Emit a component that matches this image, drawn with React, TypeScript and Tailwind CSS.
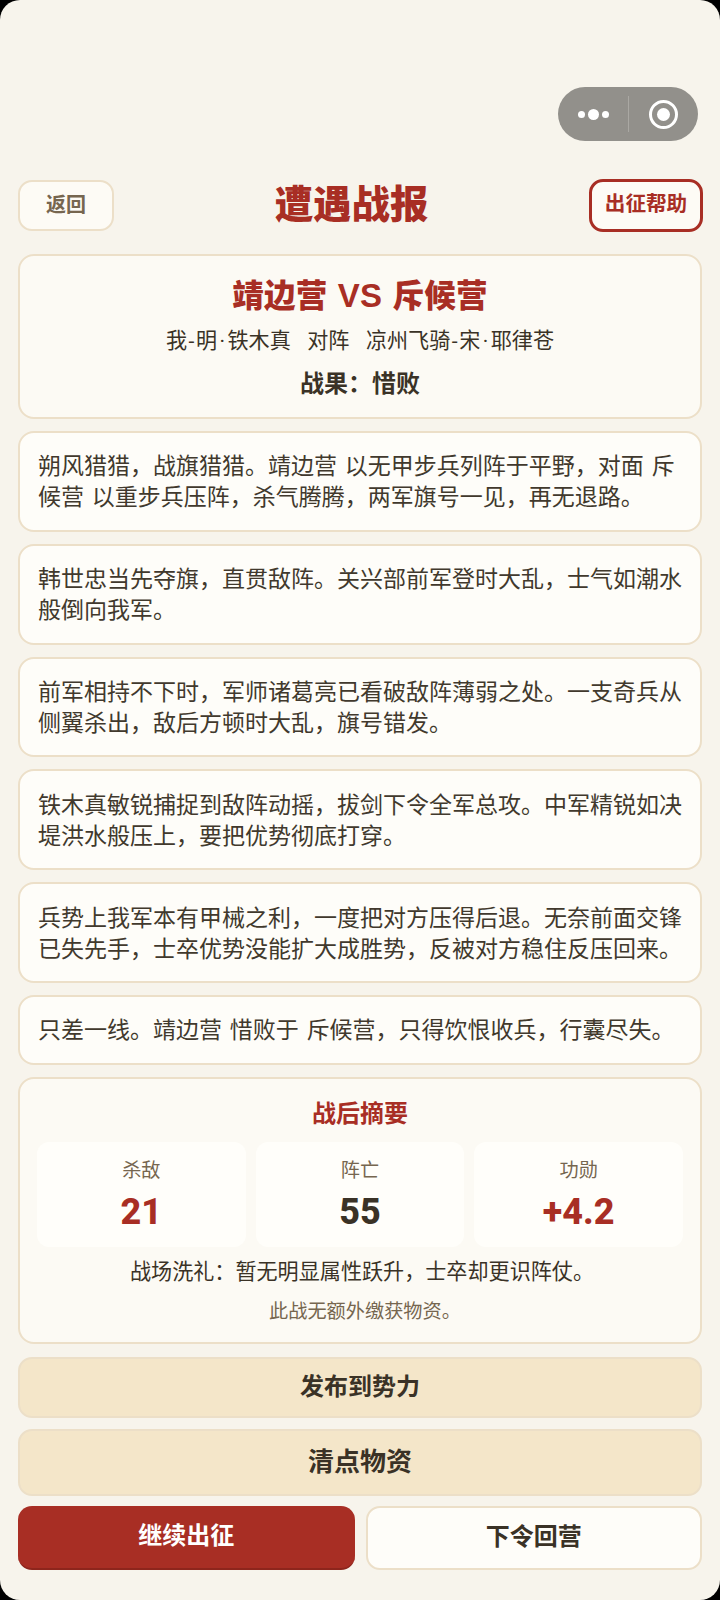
import React from 'react';

const stories = [
  '朔风猎猎，战旗猎猎。靖边营 以无甲步兵列阵于平野，对面 斥候营 以重步兵压阵，杀气腾腾，两军旗号一见，再无退路。',
  '韩世忠当先夺旗，直贯敌阵。关兴部前军登时大乱，士气如潮水般倒向我军。',
  '前军相持不下时，军师诸葛亮已看破敌阵薄弱之处。一支奇兵从侧翼杀出，敌后方顿时大乱，旗号错发。',
  '铁木真敏锐捕捉到敌阵动摇，拔剑下令全军总攻。中军精锐如决堤洪水般压上，要把优势彻底打穿。',
  '兵势上我军本有甲械之利，一度把对方压得后退。无奈前面交锋已失先手，士卒优势没能扩大成胜势，反被对方稳住反压回来。',
  '只差一线。靖边营 惜败于 斥候营，只得饮恨收兵，行囊尽失。',
];

const stats = [
  { label: '杀敌', value: '21', color: 'text-[#a82e24]' },
  { label: '阵亡', value: '55', color: 'text-[#3a3226]' },
  { label: '功勋', value: '+4.2', color: 'text-[#a82e24]' },
];

const Dash = () => <span className="mx-[1.5px]">-</span>;
const Dot = () => <span className="mx-[2.5px]">·</span>;

export default function App() {
  return (
    <div className="bg-black">
      <div className="h-[1600px] overflow-hidden rounded-[20px] bg-[#f7f4ec] pt-[87px] font-['Roboto','Noto_Sans_CJK_SC',sans-serif] text-[#3a3226]">
        {/* wechat capsule */}
        <div className="flex justify-end pr-[22px]">
          <div className="flex h-[54px] w-[140px] items-center rounded-full bg-[#92908b]">
            <div className="flex w-[70px] items-center justify-center gap-[3px] pl-[1px]">
              <span className="size-[7px] rounded-full bg-white" />
              <span className="size-[11px] rounded-full bg-white" />
              <span className="size-[7px] rounded-full bg-white" />
            </div>
            <div className="h-[36px] w-px bg-[#aaa8a3]" />
            <div className="flex flex-1 items-center justify-center">
              <div className="flex size-[29px] items-center justify-center rounded-full border-[3px] border-white">
                <span className="size-[13px] rounded-full bg-white" />
              </div>
            </div>
          </div>
        </div>

        {/* header */}
        <div className="mt-[38px] flex items-center justify-between pr-[17px] pl-[18px]">
          <button className="h-[51px] w-[96px] rounded-[14px] border-2 border-[#ecdfc8] bg-[#fdfbf5] pb-[2px] text-[20px] font-bold text-[#76664f]">
            返回
          </button>
          <h1 className="mb-[2px] text-[38.4px] leading-[51px] font-black text-[#a82e24]">遭遇战报</h1>
          <button className="h-[53px] w-[114px] rounded-[14px] border-[3px] border-[#a82e24] bg-[#fdfbf5] pb-[3px] text-[20.6px] font-bold text-[#a82e24]">
            出征帮助
          </button>
        </div>

        <div className="mt-[22px] flex flex-col gap-[12px] px-[18px]">
          {/* match card */}
          <div className="flex h-[165px] flex-col items-center rounded-[16px] border-2 border-[#ecdfc8] bg-[#fcfaf4] pt-[18px]">
            <div className="text-[31.5px] leading-[44px] font-black tracking-[0.3px] text-[#a82e24] [word-spacing:2px]">
              靖边营 <span className="font-['Liberation_Sans'] text-[33px] font-bold">VS</span> 斥候营
            </div>
            <div className="mt-[4px] text-[21.1px] leading-[36px] whitespace-pre [word-spacing:3px]">
              我<Dash />明<Dot />铁木真  对阵  凉州飞骑<Dash />宋<Dot />耶律苍
            </div>
            <div className="mt-[4px] text-[24px] leading-[42px] font-bold">战果：惜败</div>
          </div>

          {stories.map((text, i) => (
            <div
              key={i}
              className="rounded-[16px] border-2 border-[#ecdfc8] bg-[#fefdf9] px-[18px] pt-[18.4px] pb-[16.4px] text-[23px] leading-[31px] text-[#41392d] [word-spacing:2px]"
            >
              {text}
            </div>
          ))}

          {/* summary */}
          <div className="flex h-[267px] flex-col items-center rounded-[16px] border-2 border-[#ecdfc8] bg-[#fcfaf4] px-[17px] pt-[18px]">
            <div className="text-[24px] leading-[34px] font-bold text-[#a82e24]">战后摘要</div>
            <div className="mt-[11px] grid w-full grid-cols-3 gap-[10px]">
              {stats.map((s) => (
                <div key={s.label} className="flex h-[105px] flex-col items-center rounded-[12px] bg-[#fffefa] pt-[16px]">
                  <div className="text-[19.2px] leading-[26px] text-[#76664f]">{s.label}</div>
                  <div className={`mt-[3px] text-[36px] leading-[50px] font-extrabold ${s.color}`}>{s.value}</div>
                </div>
              ))}
            </div>
            <div className="mt-[10px] pl-[4px] text-[21.1px] leading-[30px]">战场洗礼：暂无明显属性跃升，士卒却更识阵仗。</div>
            <div className="mt-[11px] pl-[10px] text-[19.2px] leading-[28px] text-[#76664f]">此战无额外缴获物资。</div>
          </div>
        </div>

        {/* actions */}
        <div className="mt-[13px] flex flex-col gap-[10.5px] px-[18px]">
          <button className="h-[61.5px] rounded-[14px] border-2 border-[#ecdfc8] bg-[#f4e6c9] text-[24px] font-bold">发布到势力</button>
          <button className="h-[67px] rounded-[14px] border-2 border-[#ecdfc8] bg-[#f4e6c9] text-[26px] font-bold">清点物资</button>
          <div className="grid grid-cols-2 gap-[11px]">
            <button className="h-[64px] rounded-[14px] border-b-2 border-[#8d251c] bg-[#a82e24] pb-[2px] text-[24px] font-bold text-white">继续出征</button>
            <button className="h-[64px] rounded-[14px] border-2 border-[#ecdfc8] bg-[#fefdf9] pb-[2px] text-[24px] font-bold">下令回营</button>
          </div>
        </div>
      </div>
    </div>
  );
}
